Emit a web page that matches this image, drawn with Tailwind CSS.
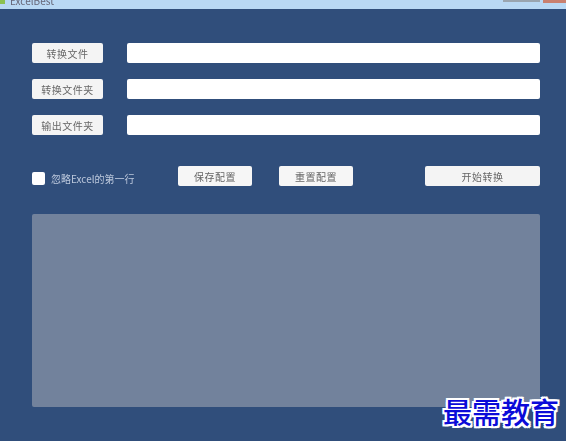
<!DOCTYPE html>
<html lang="en">
<head>
	<meta charset="UTF-8">
	<title>ExcelBest</title>
	<script src="https://cdn.jsdelivr.net/npm/@tailwindcss/browser@4"></script>
</head>
<body class="w-[566px] h-[441px] overflow-hidden bg-[#304e7b] font-['Noto_Sans_CJK_SC',sans-serif]">
	<div class="relative w-[566px] h-[441px]">
		<!-- title bar, cut off at the top of the picture -->
		<div class="h-[9px] bg-[#b9d8f4] flex items-start overflow-hidden">
			<div class="w-[5px] h-[4px] bg-[#8cc152]"></div>
			<span class="ml-[5px] mt-[-5px] text-[10px] leading-[12px] text-[#667] blur-[0.5px]">ExcelBest</span>
			<div class="ml-auto w-[37px] h-[2px] bg-[#9aa5b0]"></div>
			<div class="ml-[3px] w-[23px] h-[3px] bg-[#c9806f]"></div>
		</div>

		<div class="pl-[32px] pr-[26px] pt-[34px] text-[#666] text-[10px] blur-[0.4px]">
			<div class="flex flex-col gap-[16px]">
				<div class="flex gap-[24px]">
					<button class="w-[71px] h-[20px] bg-[#f4f4f4] rounded-[2px] tracking-[0.5px]">转换文件</button>
					<div class="flex-1 h-[20px] bg-white rounded-[2px]"></div>
				</div>
				<div class="flex gap-[24px]">
					<button class="w-[71px] h-[20px] bg-[#f4f4f4] rounded-[2px] tracking-[0.5px]">转换文件夹</button>
					<div class="flex-1 h-[20px] bg-white rounded-[2px]"></div>
				</div>
				<div class="flex gap-[24px]">
					<button class="w-[71px] h-[20px] bg-[#f4f4f4] rounded-[2px] tracking-[0.5px]">输出文件夹</button>
					<div class="flex-1 h-[20px] bg-white rounded-[2px]"></div>
				</div>
			</div>

			<div class="flex items-center mt-[31px] h-[20px]">
				<div class="w-[13px] h-[13px] mt-[5px] bg-white rounded-[2px]"></div>
				<span class="ml-[6px] w-[127px] mt-[4px] text-[#bcc8dc]">忽略Excel的第一行</span>
				<button class="w-[74px] h-[20px] bg-[#f6f6f6] rounded-[2px] tracking-[0.5px]">保存配置</button>
				<button class="ml-[27px] w-[74px] h-[20px] bg-[#f6f6f6] rounded-[2px] tracking-[0.5px]">重置配置</button>
				<button class="ml-auto w-[115px] h-[20px] bg-[#f4f4f4] rounded-[2px] tracking-[0.5px]">开始转换</button>
			</div>

			<div class="mt-[28px] h-[193px] bg-[#72829c] rounded-[2px]"></div>
		</div>

		<!-- watermark over the corner of the panel -->
		<div class="absolute left-[443px] top-[392px] text-[29px] leading-[38px] font-medium text-[#0b0bd8] [text-shadow:2px_0_0_#fff,-2px_0_0_#fff,0_2px_0_#fff,0_-2px_0_#fff,2px_2px_0_#fff,-2px_-2px_0_#fff,2px_-2px_0_#fff,-2px_2px_0_#fff]">最需教育</div>
	</div>
</body>
</html>
